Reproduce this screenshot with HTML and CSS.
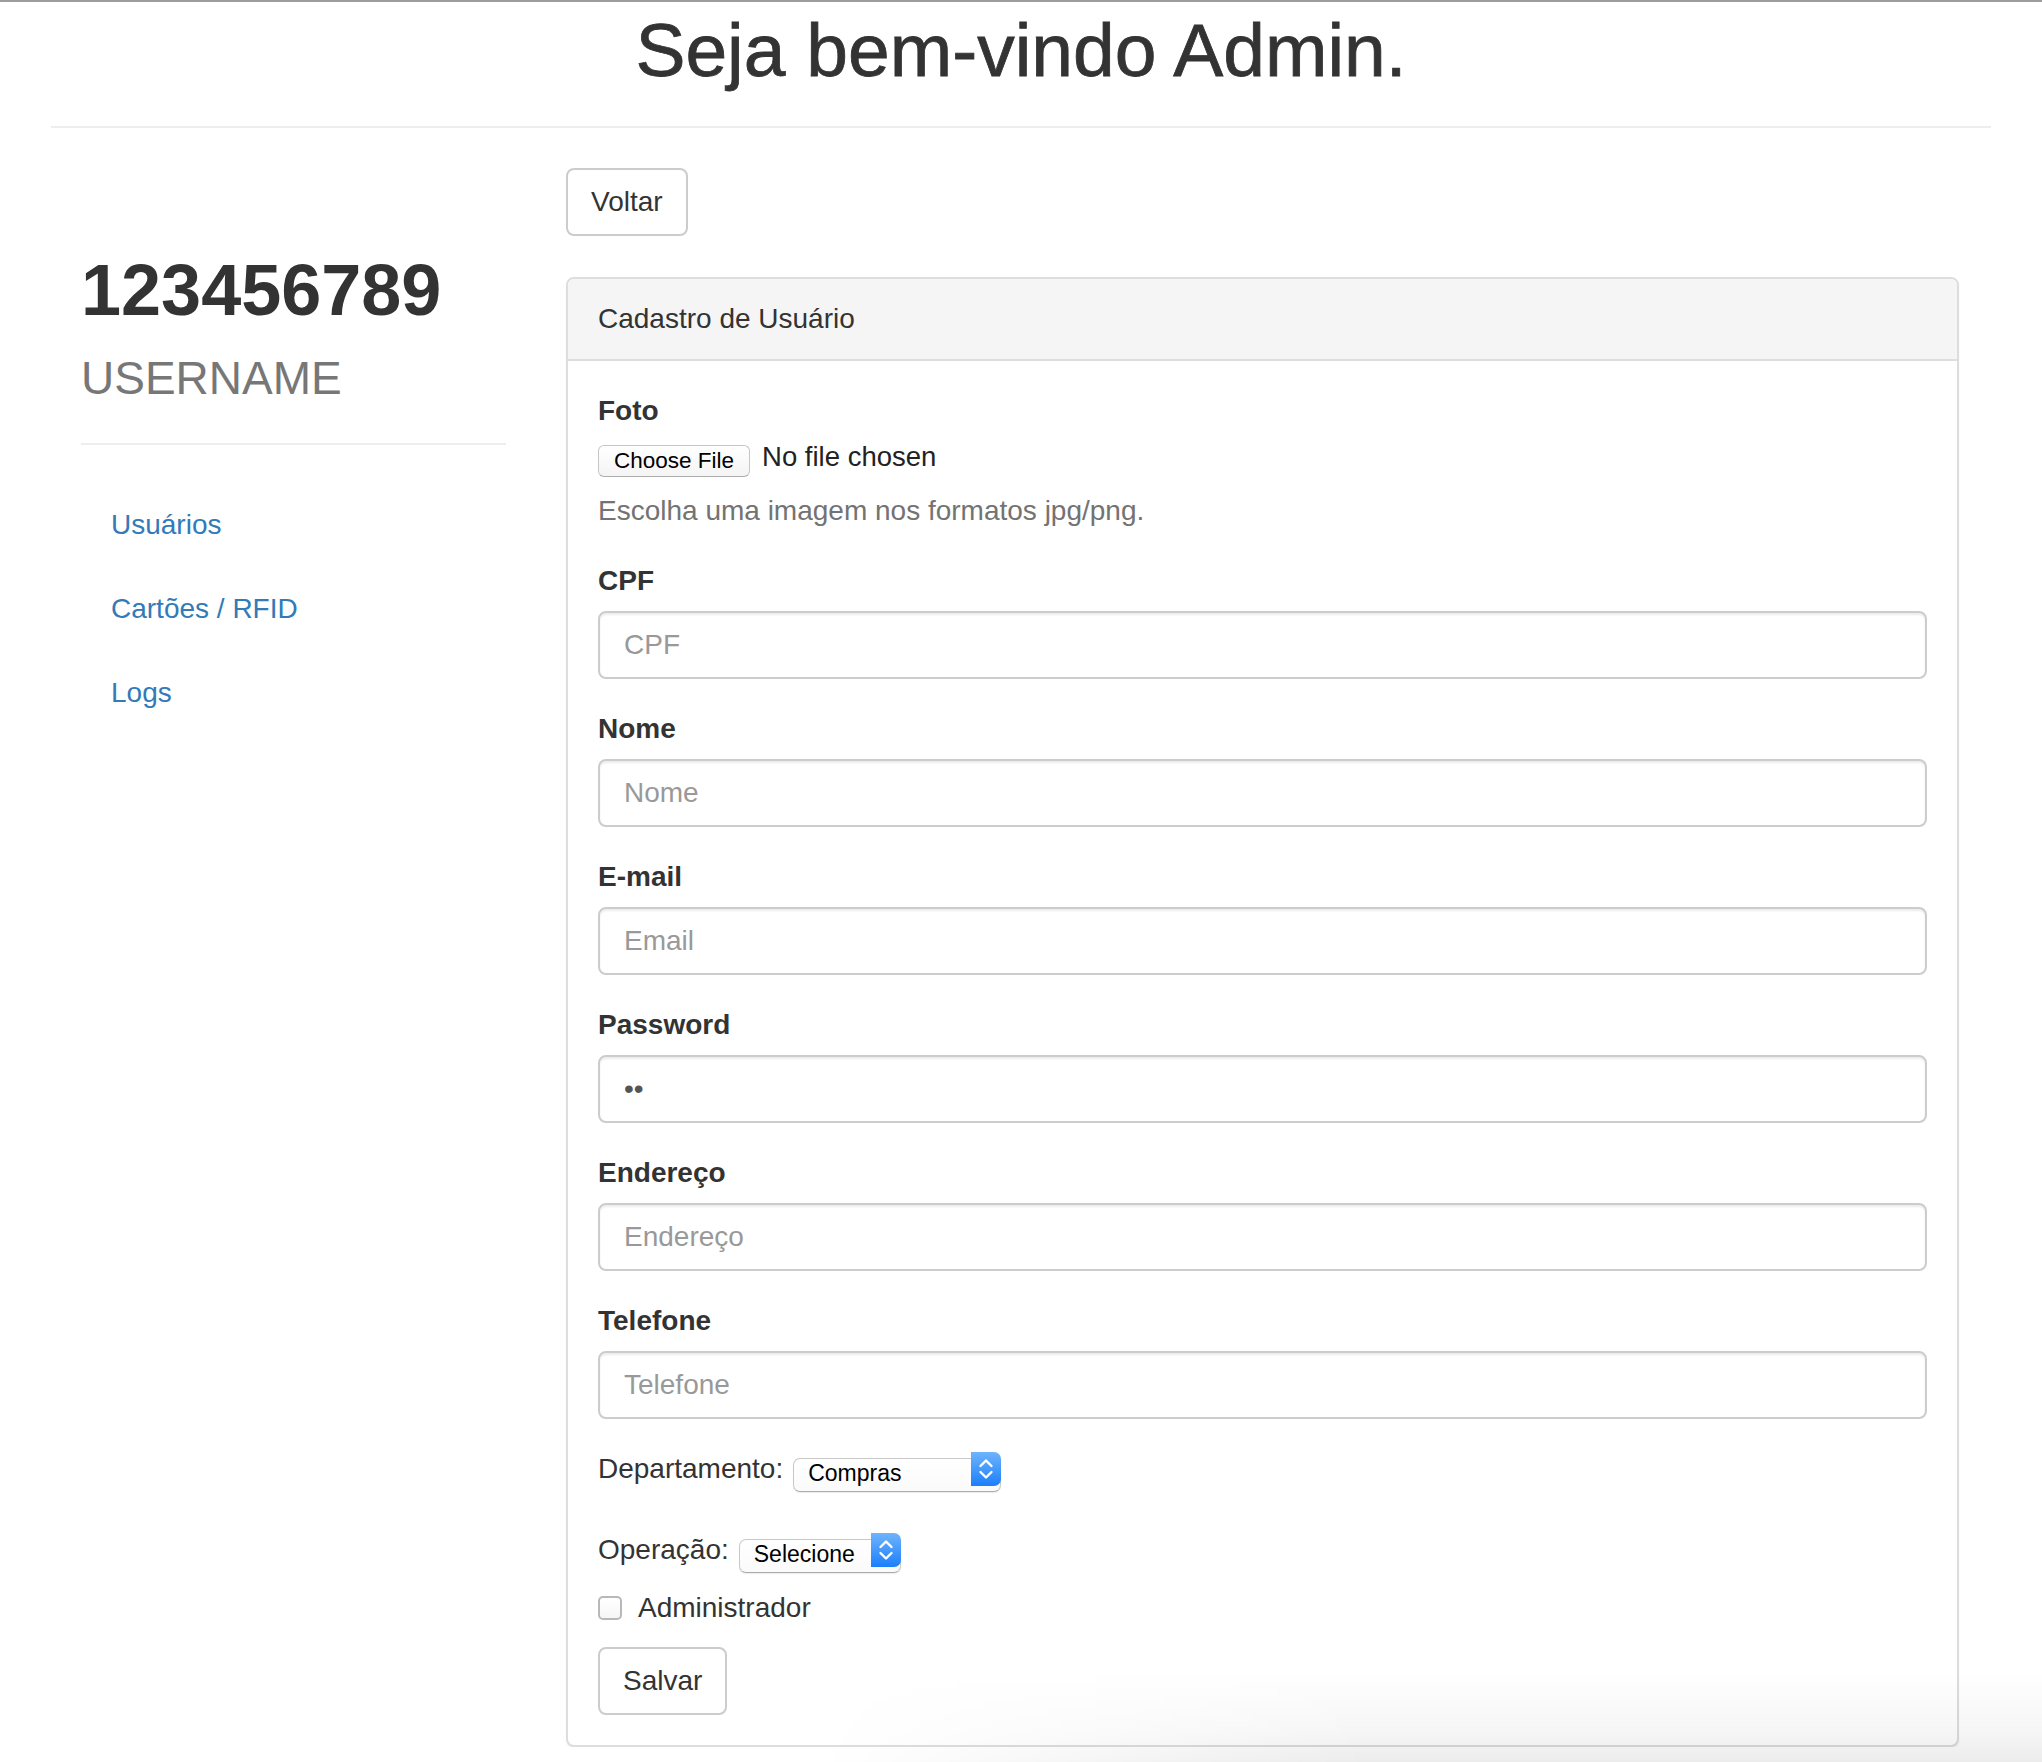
FILE: index.html
```html
<!DOCTYPE html>
<html lang="pt-BR">
<head>
<meta charset="utf-8">
<title>Cadastro de Usuário</title>
<link rel="stylesheet" href="styles.css">
</head>
<body>
<div class="page">
  <header class="page-header">
    <h1 class="welcome">Seja bem-vindo Admin.</h1>
    <hr class="divider">
  </header>
  <div class="row">
    <aside class="sidebar">
      <h1 class="profile-id">123456789<br><small>USERNAME</small></h1>
      <hr class="side-divider">
      <ul class="nav">
        <li><a href="#">Usuários</a></li>
        <li><a href="#">Cartões / RFID</a></li>
        <li><a href="#">Logs</a></li>
      </ul>
    </aside>
    <main class="content">
      <div class="toolbar"><button class="btn" type="button">Voltar</button></div>
      <section class="panel">
        <div class="panel-heading">Cadastro de Usuário</div>
        <form class="panel-body">
          <div class="form-group">
            <label class="control-label">Foto</label>
            <label class="file-input">
              <span class="file-btn">Choose File</span>
              <span class="file-name">No file chosen</span>
            </label>
            <p class="help-block">Escolha uma imagem nos formatos jpg/png.</p>
          </div>
          <div class="form-group">
            <label class="control-label" for="cpf">CPF</label>
            <input class="form-control" id="cpf" type="text" placeholder="CPF">
          </div>
          <div class="form-group">
            <label class="control-label" for="nome">Nome</label>
            <input class="form-control" id="nome" type="text" placeholder="Nome">
          </div>
          <div class="form-group">
            <label class="control-label" for="email">E-mail</label>
            <input class="form-control" id="email" type="email" placeholder="Email">
          </div>
          <div class="form-group">
            <label class="control-label" for="pw">Password</label>
            <input class="form-control" id="pw" type="password" value="12">
          </div>
          <div class="form-group">
            <label class="control-label" for="end">Endereço</label>
            <input class="form-control" id="end" type="text" placeholder="Endereço">
          </div>
          <div class="form-group">
            <label class="control-label" for="tel">Telefone</label>
            <input class="form-control" id="tel" type="text" placeholder="Telefone">
          </div>
          <div class="select-row">
            <span class="inline-label">Departamento:</span>
            <span class="select select-dept">
              <select><option>Compras</option><option>Vendas</option></select>
              <span class="select-arrow"><svg width="16" height="26" viewBox="0 0 16 26"><polyline points="2.5,10 8,4.5 13.5,10" /><polyline points="2.5,16 8,21.5 13.5,16" /></svg></span>
            </span>
          </div>
          <div class="select-row">
            <span class="inline-label">Operação:</span>
            <span class="select select-op">
              <select><option>Selecione</option><option>Entrada</option></select>
              <span class="select-arrow"><svg width="16" height="26" viewBox="0 0 16 26"><polyline points="2.5,10 8,4.5 13.5,10" /><polyline points="2.5,16 8,21.5 13.5,16" /></svg></span>
            </span>
          </div>
          <label class="check-row">
            <input class="checkbox" type="checkbox">
            <span>Administrador</span>
          </label>
          <button class="btn btn-save" type="submit">Salvar</button>
        </form>
      </section>
    </main>
  </div>
</div>
<div class="shade"></div>
</body>
</html>
```
FILE: styles.css
```css
html {
  overflow: hidden;
}
body {
  margin: 0;
  border-top: 2px solid #9c9c9c;
  font-family: "Liberation Sans", Arial, sans-serif;
  font-size: 28px;
  line-height: 40px;
  color: #333;
  background: #fff;
}
.page {
  width: 1940px;
  margin: 0 auto;
}
.welcome {
  margin: 8px 0 0;
  font-size: 75px;
  line-height: 80px;
  font-weight: 400;
  text-align: center;
  color: #333;
  -webkit-text-stroke: 0.8px #333;
}
.divider {
  margin: 36px 0 40px;
  height: 0;
  border: 0;
  border-top: 2px solid #eee;
}
.row {
  display: flex;
}
.sidebar {
  width: 485px;
  flex: none;
  padding: 0 30px;
  box-sizing: border-box;
}
.profile-id {
  margin: 83px 0 0;
  font-size: 72px;
  line-height: 79px;
  font-weight: 700;
  color: #333;
}
.profile-id small {
  font-size: 46px;
  font-weight: 400;
  line-height: 1;
  color: #777;
}
.side-divider {
  margin: 34px 0 40px;
  height: 0;
  border: 0;
  border-top: 2px solid #eee;
}
.nav {
  list-style: none;
  margin: 0;
  padding: 0;
}
.nav li + li {
  margin-top: 4px;
}
.nav a {
  display: block;
  padding: 20px 30px;
  border-radius: 8px;
  color: #337ab7;
  text-decoration: none;
}
.content {
  flex: 1;
  padding: 0 32px 0 30px;
}
.toolbar {
  margin-bottom: 41px;
}
.btn {
  display: inline-block;
  font-family: inherit;
  font-size: 28px;
  line-height: 40px;
  padding: 12px 23px;
  color: #333;
  background: #fff;
  border: 2px solid #ccc;
  border-radius: 8px;
}
.panel {
  border: 2px solid #ddd;
  border-radius: 8px;
  background: #fff;
  box-shadow: 0 2px 2px rgba(0, 0, 0, 0.05);
}
.panel-heading {
  padding: 20px 30px;
  background: #f5f5f5;
  border-bottom: 2px solid #ddd;
  border-radius: 6px 6px 0 0;
  color: #333;
}
.panel-body {
  padding: 30px;
  margin: 0;
}
.form-group {
  margin-bottom: 30px;
}
.control-label {
  display: block;
  font-weight: 700;
  margin-bottom: 10px;
}
.form-control {
  display: block;
  width: 100%;
  height: 68px;
  box-sizing: border-box;
  padding: 12px 24px;
  font-family: inherit;
  font-size: 28px;
  line-height: 40px;
  color: #555;
  background: #fff;
  border: 2px solid #ccc;
  border-radius: 8px;
  box-shadow: inset 0 2px 2px rgba(0, 0, 0, 0.075);
  outline: none;
}
.form-control::placeholder {
  color: #999;
}
.file-input {
  display: flex;
  align-items: flex-start;
  height: 40px;
  gap: 12px;
}
.file-btn {
  margin-top: 4px;
  height: 32px;
  box-sizing: border-box;
  padding: 0 15px;
  font-size: 22.5px;
  line-height: 30px;
  color: #000;
  background: linear-gradient(#fff, #f4f4f4);
  border: 1px solid #c6c6c6;
  border-bottom-color: #aeaeae;
  border-radius: 6px;
}
.file-name {
  font-size: 27.5px;
  line-height: 32px;
  color: #222;
}
.help-block {
  margin: 10px 0 20px;
  color: #737373;
}
.select-row {
  display: flex;
  align-items: center;
  height: 40px;
  gap: 10px;
}
.select-row + .select-row {
  margin-top: 41px;
}
.select {
  position: relative;
  display: inline-block;
  height: 34px;
}
.select select {
  appearance: none;
  -webkit-appearance: none;
  height: 34px;
  box-sizing: border-box;
  margin: 0;
  padding: 0 36px 3px 14px;
  font-family: "Liberation Sans", Arial, sans-serif;
  font-size: 23px;
  color: #000;
  background: linear-gradient(#fff, #fafafa);
  border: 1px solid #c8c8c8;
  border-bottom-color: #acacac;
  border-radius: 7px;
  box-shadow: 0 1px 1px rgba(0, 0, 0, 0.08);
  outline: none;
}
.select-dept select {
  width: 208px;
}
.select-op select {
  width: 162px;
}
.select-arrow {
  position: absolute;
  top: 0;
  right: 0;
  bottom: 0;
  width: 30px;
  display: flex;
  align-items: center;
  justify-content: center;
  background: linear-gradient(#6fb4fc, #1b7ffb);
  border-radius: 0 7px 7px 0;
  pointer-events: none;
}
.select-arrow svg polyline {
  fill: none;
  stroke: #fff;
  stroke-width: 2.4;
  stroke-linecap: round;
  stroke-linejoin: round;
}
.check-row {
  display: flex;
  align-items: center;
  height: 40px;
  gap: 16px;
  margin-top: 18px;
}
.checkbox {
  appearance: none;
  -webkit-appearance: none;
  width: 24px;
  height: 24px;
  margin: 0;
  box-sizing: border-box;
  border: 2px solid #b8b8b8;
  border-radius: 5px;
  background: linear-gradient(#fff, #f6f6f6);
}
.btn-save {
  display: block;
  margin-top: 19px;
}
.shade {
  position: fixed;
  left: 820px;
  right: 0;
  bottom: 0;
  height: 90px;
  background: linear-gradient(to bottom, rgba(0, 0, 0, 0) 0%, rgba(0, 0, 0, 0.035) 65%, rgba(0, 0, 0, 0.075) 100%);
  -webkit-mask-image: linear-gradient(to right, transparent 0%, #000 45%);
  mask-image: linear-gradient(to right, transparent 0%, #000 45%);
  pointer-events: none;
}
```
